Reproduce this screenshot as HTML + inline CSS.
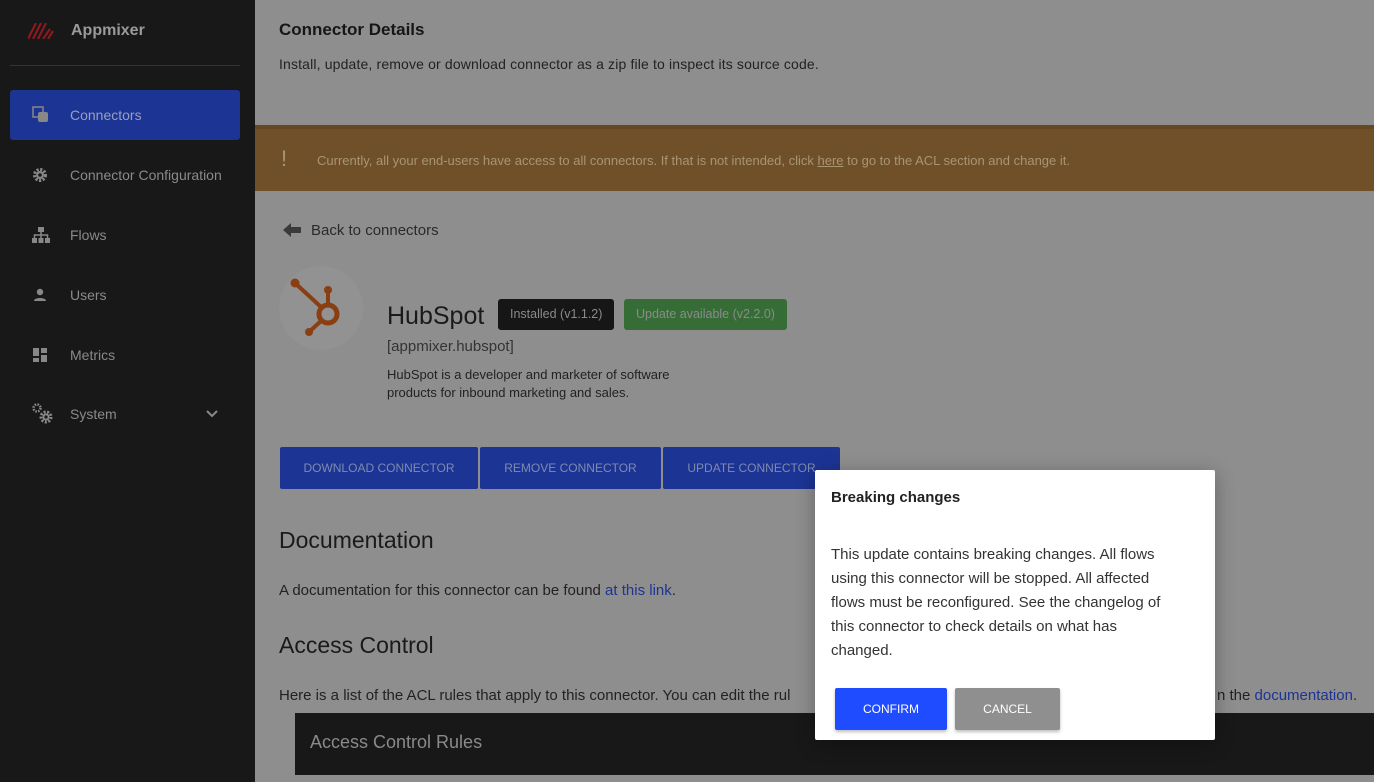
<!DOCTYPE html>
<html><head><meta charset="utf-8"><style>
*{box-sizing:border-box;margin:0;padding:0}
body{width:1374px;height:782px;overflow:hidden;background:#8e8e8e;font-family:"Liberation Sans",sans-serif;position:relative}
.sb{position:absolute;left:0;top:0;width:255px;height:782px;background:#181818;color:#8a8a8a}
.logo{position:absolute;left:71px;top:22px;font-weight:bold;font-size:16px;color:#9a9a9a}
.hr{position:absolute;left:10px;right:15px;top:65px;border-top:1px solid #333}
.item{position:absolute;left:10px;width:230px;height:50px;border-radius:3px;font-size:14px;display:flex;align-items:center;padding-left:60px;color:#8a8a8a}
.item svg{position:absolute;left:22px}
.act{background:#1c3494;color:#9aa0b8}
.main{position:absolute;left:255px;top:0;right:0;height:782px}
h1{position:absolute;left:24px;top:20px;font-size:17px;color:#161616}
.sub{position:absolute;left:24px;top:56px;font-size:14px;color:#222;letter-spacing:0.15px}
.ban{position:absolute;left:0;right:0;top:125px;height:66px;background:#6f5029;border-top:4px solid #654823;color:#a89574;font-size:13px;padding:24px 0 0 62px}
.ban b{position:absolute;left:26px;top:17px;font-size:22px;color:#a89574;font-weight:normal}
.back{position:absolute;left:56px;top:222px;font-size:15px;color:#2a2a2a}
.circ{position:absolute;left:24px;top:266px;width:84px;height:84px;border-radius:50%;background:#929292}
.hs{position:absolute;left:132px;top:302px;font-size:25px;color:#1a1a1a}
.bd{position:absolute;top:299px;height:31px;border-radius:3px;font-size:12.5px;padding:8px 12px;color:#8a8a8a;white-space:nowrap}
.id{position:absolute;left:132px;top:338px;font-size:15px;color:#333}
.desc{position:absolute;left:132px;top:366px;font-size:13px;line-height:18px;color:#222;width:330px}
.btn{position:absolute;top:447px;height:42px;background:#1c3494;color:#7f8ab0;font-size:12px;display:flex;align-items:center;justify-content:center;border-radius:2px}
h2{position:absolute;left:24px;font-size:23px;font-weight:normal;color:#1a1a1a}
.p{position:absolute;left:24px;font-size:15px;color:#222;white-space:nowrap}
.lk{color:#1c3494}
.acl{position:absolute;left:40px;top:713px;right:0;height:62px;background:#181818;color:#8a8a8a;font-size:18px;padding:19px 15px}
.modal{position:absolute;left:815px;top:470px;width:400px;height:270px;background:#fff;border-radius:2px;box-shadow:0 4px 20px rgba(0,0,0,.3)}
.modal h3{position:absolute;left:16px;top:19px;font-size:15px;color:#222}
.modal p{position:absolute;left:16px;top:73px;width:345px;font-size:15px;line-height:24px;color:#333}
.mb{position:absolute;top:218px;height:42px;font-size:12px;color:#fff;display:flex;align-items:center;justify-content:center;border-radius:2px;box-shadow:0 2px 3px rgba(0,0,0,.25)}
</style></head><body>
<div class="sb">
<svg style="position:absolute;left:28px;top:23px" width="26" height="16" viewBox="0 0 26 16"><path d="M0 16L8 0M5 16L13 0M10 16L18 0M15 16L22 6M20 16L25 8" stroke="#8b1a1f" stroke-width="2.2"/></svg>
<div class="logo">Appmixer</div>
<div class="hr"></div>
<div class="item act" style="top:90px"><svg width="18" height="18" viewBox="0 0 18 18"><rect x="1" y="1" width="10" height="10" fill="none" stroke="#888" stroke-width="1.5"/><rect x="6" y="6" width="10" height="10" rx="2" fill="#888"/></svg>Connectors</div>
<div class="item" style="top:150px"><svg width="16" height="16" viewBox="0 0 16 16"><circle cx="8" cy="8" r="5.5" fill="none" stroke="#888" stroke-width="3" stroke-dasharray="2.2 1.5"/><circle cx="8" cy="8" r="4" fill="#888"/><circle cx="8" cy="8" r="1.8" fill="#181818"/></svg>Connector Configuration</div>
<div class="item" style="top:210px"><svg width="18" height="16" viewBox="0 0 18 16"><rect x="6" y="0" width="6" height="5" fill="#888"/><rect x="0" y="11" width="5" height="5" fill="#888"/><rect x="6.5" y="11" width="5" height="5" fill="#888"/><rect x="13" y="11" width="5" height="5" fill="#888"/><path d="M9 5v6M2.5 11V8h13v3" stroke="#888" fill="none" stroke-width="1.5"/></svg>Flows</div>
<div class="item" style="top:270px"><svg width="16" height="16" viewBox="0 0 16 16"><circle cx="8" cy="5" r="3.2" fill="#888"/><path d="M2 14c0-4 12-4 12 0z" fill="#888"/></svg>Users</div>
<div class="item" style="top:330px"><svg width="16" height="16" viewBox="0 0 16 16"><rect x="1" y="1" width="6" height="8" fill="#888"/><rect x="9" y="1" width="6" height="5" fill="#888"/><rect x="1" y="11" width="6" height="4" fill="#888"/><rect x="9" y="8" width="6" height="7" fill="#888"/></svg>Metrics</div>
<div class="item" style="top:389px"><svg width="22" height="22" viewBox="0 0 22 22"><circle cx="5" cy="5" r="3.5" fill="none" stroke="#888" stroke-width="2.5" stroke-dasharray="1.6 1.2"/><circle cx="14" cy="14" r="5" fill="none" stroke="#888" stroke-width="3" stroke-dasharray="2 1.5"/><circle cx="14" cy="14" r="3.5" fill="#888"/><circle cx="14" cy="14" r="1.6" fill="#181818"/></svg>System<svg style="left:195px" width="14" height="10" viewBox="0 0 14 10"><path d="M2 2l5 5 5-5" stroke="#888" stroke-width="2" fill="none"/></svg></div>
</div>
<div class="main">
<h1>Connector Details</h1>
<div class="sub">Install, update, remove or download connector as a zip file to inspect its source code.</div>
<div class="ban"><b>!</b>Currently, all your end-users have access to all connectors. If that is not intended, click <u>here</u> to go to the ACL section and change it.</div>
<svg style="position:absolute;left:28px;top:222px" width="18" height="16" viewBox="0 0 18 16"><path d="M0 8L8 1v4h10v6H8v4z" fill="#3a3a3a"/></svg>
<div class="back">Back to connectors</div>
<div class="circ"><svg width="84" height="84" viewBox="0 0 84 84"><g stroke="#8a3f12" stroke-width="4" fill="none" stroke-linecap="round"><circle cx="49" cy="48" r="9" stroke-width="5"/><path d="M16 17L42 41M49 39V24M42 55L30 66"/></g><circle cx="16" cy="17" r="4.5" fill="#8a3f12"/><circle cx="49" cy="24" r="4" fill="#8a3f12"/><circle cx="30" cy="66" r="4" fill="#8a3f12"/></svg></div>
<div class="hs">HubSpot</div>
<div class="bd" style="left:243px;background:#161616">Installed (v1.1.2)</div>
<div class="bd" style="left:369px;background:#366d36;width:163px">Update available (v2.2.0)</div>
<div class="id">[appmixer.hubspot]</div>
<div class="desc">HubSpot is a developer and marketer of software products for inbound marketing and sales.</div>
<div class="btn" style="left:25px;width:198px">DOWNLOAD CONNECTOR</div>
<div class="btn" style="left:225px;width:181px">REMOVE CONNECTOR</div>
<div class="btn" style="left:408px;width:177px">UPDATE CONNECTOR</div>
<h2 style="top:527px">Documentation</h2>
<div class="p" style="top:582px">A documentation for this connector can be found <span class="lk">at this link</span>.</div>
<h2 style="top:632px">Access Control</h2>
<div class="p" style="top:687px">Here is a list of the ACL rules that apply to this connector. You can edit the rul</div>
<div class="p" style="top:687px;left:962px">n the <span class="lk">documentation</span>.</div>
<div class="acl">Access Control Rules</div>
</div>
<div class="modal">
<h3>Breaking changes</h3>
<p>This update contains breaking changes. All flows using this connector will be stopped. All affected flows must be reconfigured. See the changelog of this connector to check details on what has changed.</p>
<div class="mb" style="left:20px;width:112px;background:#1f4cff">CONFIRM</div>
<div class="mb" style="left:140px;width:105px;background:#8f8f8f">CANCEL</div>
</div>
</body></html>
